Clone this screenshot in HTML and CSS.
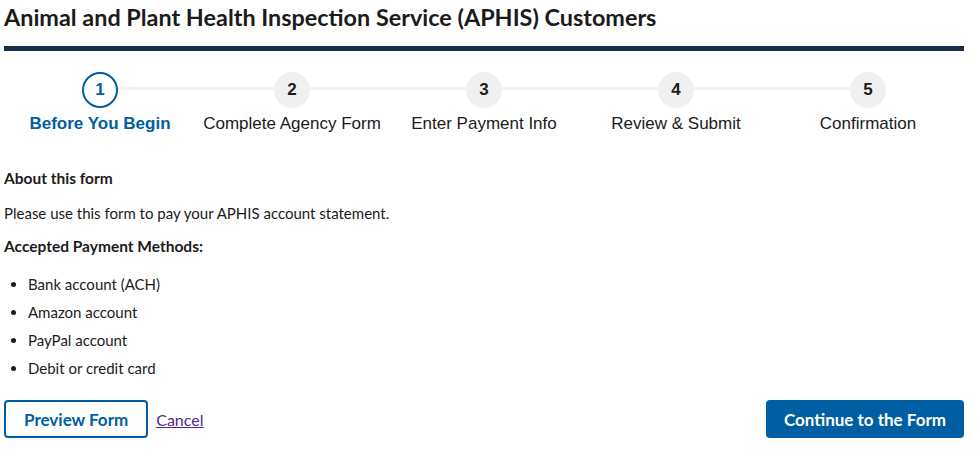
FILE: index.html
```html
<!DOCTYPE html>
<html lang="en">
<head>
<meta charset="utf-8">
<title>APHIS Customers</title>
<link rel="stylesheet" href="styles.css">
</head>
<body>
<main class="page">
  <h1 class="title">Animal and Plant Health Inspection Service (APHIS) Customers</h1>
  <div class="rule"></div>
  <ol class="steps">
    <li class="step step--current">
      <div class="track"><span class="seg seg--none"></span><span class="circle">1</span><span class="seg"></span></div>
      <span class="label">Before You Begin</span>
    </li>
    <li class="step">
      <div class="track"><span class="seg"></span><span class="circle">2</span><span class="seg"></span></div>
      <span class="label">Complete Agency Form</span>
    </li>
    <li class="step">
      <div class="track"><span class="seg"></span><span class="circle">3</span><span class="seg"></span></div>
      <span class="label">Enter Payment Info</span>
    </li>
    <li class="step">
      <div class="track"><span class="seg"></span><span class="circle">4</span><span class="seg"></span></div>
      <span class="label">Review &amp; Submit</span>
    </li>
    <li class="step">
      <div class="track"><span class="seg"></span><span class="circle">5</span><span class="seg seg--none"></span></div>
      <span class="label">Confirmation</span>
    </li>
  </ol>
  <section class="about">
    <h2 class="about-title">About this form</h2>
    <p class="about-text">Please use this form to pay your APHIS account statement.</p>
    <h3 class="methods-title">Accepted Payment Methods:</h3>
    <ul class="methods">
      <li>Bank account (ACH)</li>
      <li>Amazon account</li>
      <li>PayPal account</li>
      <li>Debit or credit card</li>
    </ul>
  </section>
  <div class="actions">
    <div class="actions-left">
      <button class="btn btn--outline" type="button">Preview Form</button>
      <a class="cancel" href="#">Cancel</a>
    </div>
    <button class="btn btn--primary" type="button">Continue to the Form</button>
  </div>
</main>
</body>
</html>
```

FILE: styles.css
```css
* { box-sizing: border-box; }

body {
  margin: 0;
  background: #ffffff;
  color: #1b1b1b;
  font-family: Lato, "Open Sans", sans-serif;
}

.page {
  width: 960px;
  margin-left: 4px;
}

.title {
  margin: 0;
  padding-top: 3px;
  font-size: 23.4px;
  line-height: 28px;
  font-weight: 700;
  color: #1b1b1b;
}

.rule {
  margin-top: 15px;
  height: 5px;
  background: #162e51;
}

.steps {
  margin: 21px 0 0;
  padding: 0;
  list-style: none;
  display: grid;
  grid-template-columns: repeat(5, 1fr);
}

.step {
  display: flex;
  flex-direction: column;
  align-items: center;
}

.track {
  width: 100%;
  height: 36px;
  display: flex;
  align-items: center;
}

.seg {
  flex: 1;
  height: 3px;
  margin-bottom: 3px;
  background: #f0f0f0;
}

.seg--none { background: transparent; }

.circle {
  width: 36px;
  height: 36px;
  border-radius: 50%;
  background: #f0f0f0;
  display: flex;
  align-items: center;
  justify-content: center;
  font-family: "Liberation Sans", Arial, sans-serif;
  font-weight: 700;
  font-size: 17px;
  color: #1b1b1b;
}

.step--current .circle {
  background: #ffffff;
  border: 2px solid #005ea2;
  color: #005ea2;
}

.label {
  margin-top: 6px;
  font-family: "Liberation Sans", Arial, sans-serif;
  font-size: 17px;
  line-height: 20px;
  color: #1b1b1b;
}

.step--current .label {
  font-weight: 700;
  color: #005ea2;
}

.about-title {
  margin: 32px 0 0;
  font-size: 15.5px;
  line-height: 24px;
  font-weight: 700;
}

.about-text {
  margin: 11px 0 0;
  font-size: 15px;
  line-height: 24px;
}

.methods-title {
  margin: 9px 0 0;
  font-size: 15.5px;
  line-height: 24px;
  font-weight: 700;
}

.methods {
  margin: 14px 0 0;
  padding-left: 24px;
  font-size: 15px;
  line-height: 24px;
}

.methods li + li { margin-top: 4px; }

.actions {
  margin-top: 20px;
  display: flex;
  justify-content: space-between;
  align-items: center;
}

.actions-left {
  display: flex;
  align-items: center;
  gap: 8px;
}

.btn {
  height: 38px;
  padding: 0 18px;
  border-radius: 4px;
  font-family: inherit;
  font-size: 17px;
  font-weight: 700;
  cursor: pointer;
}

.btn--outline {
  background: #ffffff;
  border: 2px solid #005ea2;
  color: #005ea2;
}

.btn--primary {
  background: #005ea2;
  border: 0;
  color: #ffffff;
}

.cancel {
  font-size: 16px;
  color: #54278f;
  text-decoration: underline;
}
```
